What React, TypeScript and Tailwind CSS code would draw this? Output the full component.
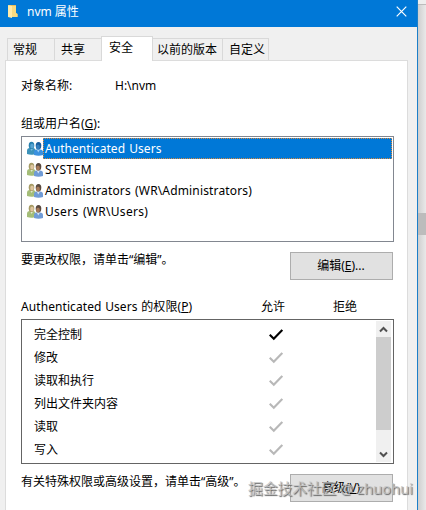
import { clsx } from "clsx";

interface Tab {
  label: string;
  className: string;
  active?: boolean;
}

const TABS: Tab[] = [
  { label: "常规", className: "w-[47px] pl-[5px]" },
  { label: "共享", className: "w-[47px] pl-[6px]" },
  { label: "安全", className: "w-[52px] pl-[7px]", active: true },
  { label: "以前的版本", className: "w-[69px] pl-[4px]" },
  { label: "自定义", className: "w-[47px] pl-[6px] border-r" },
];

const PRINCIPALS = [
  { name: "Authenticated Users", className: "tracking-[0.050px] [word-spacing:1px]" },
  { name: "SYSTEM", className: "tracking-[0.500px]" },
  { name: "Administrators (WR\\Administrators)", className: "tracking-[0.150px] [word-spacing:1px]" },
  { name: "Users (WR\\Users)", className: "tracking-[0.300px] [word-spacing:1px]" },
];

const PERMISSIONS = [
  { name: "完全控制", explicit: true },
  { name: "修改", explicit: false },
  { name: "读取和执行", explicit: false },
  { name: "列出文件夹内容", explicit: false },
  { name: "读取", explicit: false },
  { name: "写入", explicit: false },
];

function FolderIcon() {
  return (
    <svg className="shrink-0" width="10" height="13" viewBox="0 0 10 13">
      <path d="M1 0h7v8l1.500 1v3H1z" fill="#e8bf5c" />
      <path d="M0 0l4 1v12L0 12z" fill="#ffeaa8" />
      <path d="M4 1h4v7l1.500 1v3H4z" fill="#f8da80" />
    </svg>
  );
}

function UsersIcon({ selected }: { selected: boolean }) {
  return (
    <svg className="shrink-0" width="16" height="15" viewBox="0 0 16 15">
      <path d="M0 13V9.500C0 7.800 1.300 7 3 7h3c1.600 0 2.500 1 2.500 2.500V13c-2 1-6 1-8.500 0z" fill={selected ? "#3b92ba" : "#a4bd78"} />
      <path d="M3 7l1.600 3L6.500 7z" fill={selected ? "#75b7dc" : "#e3e8cf"} />
      <ellipse cx="4.500" cy="4.400" rx="2.800" ry="3.700" fill={selected ? "#267fae" : "#a69b65"} />
      <ellipse cx="5" cy="5" rx="1.800" ry="2.600" fill={selected ? "#57a4d2" : "#dfc5a0"} />
      <path d="M7 14v-3c0-1.600 1-2.500 2.500-2.500H13c1.800 0 3 1 3 2.700V14c-2.500 1-6.500 1-9 0z" fill={selected ? "#3b91df" : "#709bd6"} />
      <path d="M9.700 8.500l1.600 3 1.700-3z" fill={selected ? "#a1d0f4" : "#d5e4f5"} />
      <ellipse cx="11.500" cy="4.800" rx="2.800" ry="3.700" fill={selected ? "#1b5e9c" : "#59493e"} />
      <ellipse cx="11" cy="6" rx="1.900" ry="2.500" fill={selected ? "#347fbd" : "#a57958"} />
    </svg>
  );
}

function Check({ explicit }: { explicit: boolean }) {
  return (
    <svg className="shrink-0" width="14" height="12" viewBox="0 0 14 12">
      <path d="M.7 5.700l4.100 4.100L13.300.900" fill="none" stroke={explicit ? "#000" : "#b8b8b8"} strokeWidth="2.200" />
    </svg>
  );
}

function Chevron({ down = false }: { down?: boolean }) {
  return (
    <svg className={clsx("shrink-0", down && "rotate-180")} width="9" height="7" viewBox="0 0 9 7">
      <path d="M1 5.500L4.500 2 8 5.500" fill="none" stroke="#505050" strokeWidth="2" />
    </svg>
  );
}

function TabStrip() {
  return (
    <div className="flex h-[33px] items-end pl-[7px]">
      {TABS.map((tab) => (
        <div
          key={tab.label}
          className={clsx(
            "shrink-0 whitespace-nowrap border-t border-l border-[#d9d9d9]",
            tab.className,
            tab.active ? "relative -mb-px h-[25px] border-r bg-white leading-[22px]" : "h-[22px] bg-[#f0f0f0] leading-[22px]",
            tab.label === "以前的版本" && "border-l-0"
          )}
        >
          {tab.label}
        </div>
      ))}
    </div>
  );
}

function PrincipalList() {
  return (
    <div className="h-[106px] w-[373px] border border-[#828790] bg-white p-px">
      {PRINCIPALS.map((p, i) => (
        <div key={p.name} className="flex h-[21px] items-center pl-[4px]">
          <UsersIcon selected={i === 0} />
          <span
            className={clsx(
              "h-[21px] flex-1 border pl-px leading-[20px] whitespace-nowrap",
              p.className,
              i === 0 ? "border-dotted border-[#d78a42] bg-[#0078d7] text-white" : "border-transparent"
            )}
          >
            {p.name}
          </span>
        </div>
      ))}
    </div>
  );
}

function PermissionList() {
  return (
    <div className="flex h-[145px] w-[373px] border border-[#646464] bg-white p-px">
      <div className="flex-1 pt-[2px]">
        {PERMISSIONS.map((p) => (
          <div key={p.name} className="flex h-[23px] items-center pl-[11px]">
            <span className="w-[235px]">{p.name}</span>
            <Check explicit={p.explicit} />
          </div>
        ))}
      </div>
      <div className="mr-px flex w-[15px] flex-col bg-[#f0f0f0]">
        <div className="flex h-[16px] items-center justify-center"><Chevron /></div>
        <div className="h-[93px] bg-[#cdcdcd]" />
        <div className="flex flex-1 items-end justify-center pb-[4px]"><Chevron down /></div>
      </div>
    </div>
  );
}

function DialogButton({ children }: { children: React.ReactNode }) {
  return (
    <button className="h-[28px] w-[103px] shrink-0 border border-[#adadad] bg-[#e1e1e1] pr-px text-center leading-[26px]">
      {children}
    </button>
  );
}

export default function App() {
  return (
    <div className="relative flex h-[510px] w-[426px] overflow-hidden bg-[#e7e7e7] font-['Noto_Sans','Noto_Sans_CJK_SC',sans-serif] text-[12px] leading-[18px] text-black">
      <div className="flex w-[418px] shrink-0 flex-col border-r border-[#1c7fc9] bg-[#f0f0f0]">
        <header className="flex h-[27px] items-center bg-[#0078d7] pb-[4px] pl-[8px] text-white">
          <FolderIcon />
          <span className="ml-[9px] flex-1 pt-px">nvm 属性</span>
          <svg className="mr-[10px]" width="11" height="11" viewBox="0 0 11 11">
            <path d="M.7.700l9.600 9.600M10.300.700L.7 10.300" stroke="#fff" strokeWidth="1.200" />
          </svg>
        </header>
        <TabStrip />

        <main className="ml-[5px] h-[450px] w-[403px] border-x border-t border-[#dcdcdc] bg-white pl-[15px]">
          <div className="flex pt-[16px]">
            <span className="w-[94px]">对象名称:</span>
            <span>H:\nvm</span>
          </div>
          <div className="mt-[20px] h-[21px]">组或用户名(<u>G</u>):</div>
          <PrincipalList />

          <div className="mt-[10px] flex h-[38px] w-[372px] justify-between">
            <span className="-mt-px">要更改权限，请单击“编辑”。</span>
            <DialogButton>编辑(<u>E</u>)...</DialogButton>
          </div>
          <div className="mt-[8px] flex h-[21px]">
            <span className="w-[240px] tracking-[0.080px] [word-spacing:0.500px]">Authenticated Users 的权限(<u>P</u>)</span>
            <span className="w-[72px]">允许</span>
            <span>拒绝</span>
          </div>
          <PermissionList />

          <div className="mt-[10px] flex w-[372px] justify-between">
            <span className="-mt-px whitespace-nowrap">有关特殊权限或高级设置，请单击“高级”。</span>
            <DialogButton>高级(<u>V</u>)</DialogButton>
          </div>
        </main>
      </div>

      {/* strip of the window behind the dialog */}
      <div className="flex flex-1 flex-col bg-linear-to-r from-[#cfcfcf] to-[#e9e9e9]">
        <div className="h-[5px] border-b border-[#bcbcbc] bg-[#eeeeee]" />
        <div className="mt-[208px] h-[22px] bg-[#bcbcbc]" />
      </div>

      <div className="absolute top-[477px] left-[248px] text-[14.800px] leading-[22px] tracking-[-0.080px] whitespace-nowrap text-[#c4c4c4]/80 [text-shadow:1px_1px_1px_#666]">
        掘金技术社区 @ zhuohui
      </div>
    </div>
  );
}
